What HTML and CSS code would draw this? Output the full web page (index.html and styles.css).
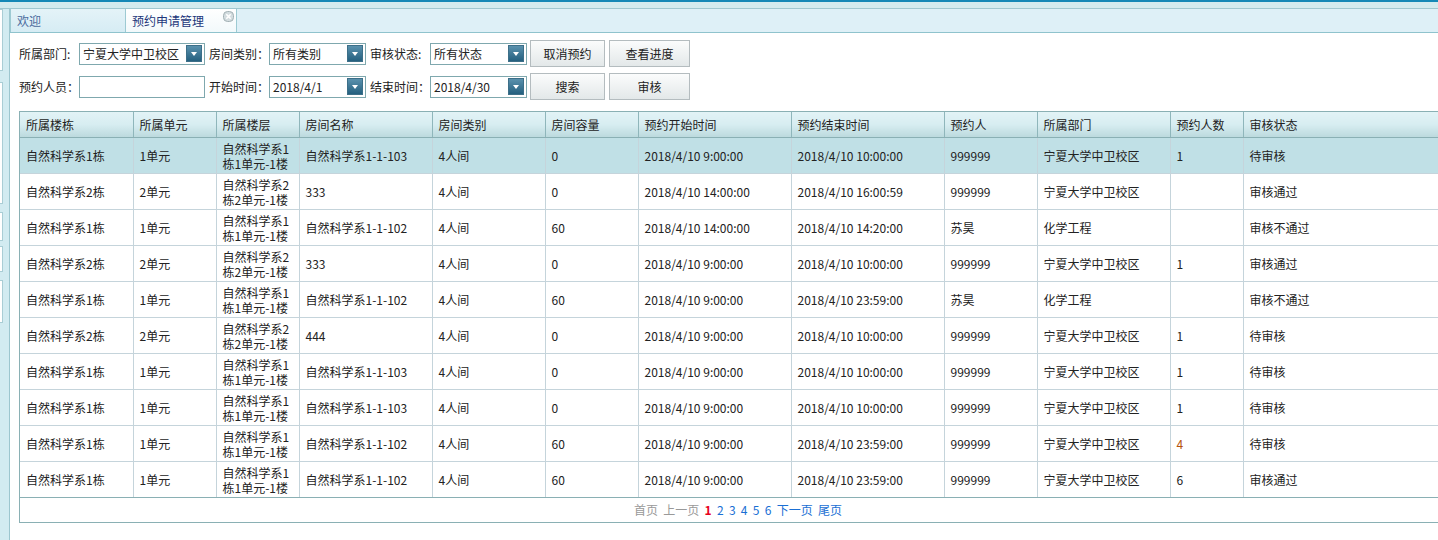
FILE: index.html
```html
<!DOCTYPE html>
<html lang="zh-CN">
<head>
<meta charset="utf-8">
<title>预约申请管理</title>
<link rel="stylesheet" href="styles.css">
</head>
<body>
<div class="topline"></div>
<div class="band"></div>
<div class="layout">
  <div class="side">
    <div class="sbox b1"></div>
    <div class="sbox b2"></div>
    <div class="sbox b3"></div>
    <div class="sbox b4"></div>
    <div class="sbox b5"></div>
  </div>
  <div class="main">
    <div class="tabs">
      <div class="tab">欢迎</div>
      <div class="tab active">预约申请管理<span class="close"><svg width="11" height="11" viewBox="0 0 11 11"><rect x="0.5" y="0.5" width="10" height="10" rx="4" fill="#d3dcdf" stroke="#a3b1b5" stroke-width="1"/><path d="M3.3 3.3L7.7 7.7M7.7 3.3L3.3 7.7" stroke="#fff" stroke-width="1.6"/></svg></span></div>
    </div>
    <div class="content">
      <div class="filters">
        <div class="frow">
          <span class="lbl l1">所属部门:</span>
          <div class="combo w126"><span class="val">宁夏大学中卫校区</span><span class="arrow"></span></div>
          <span class="lbl">房间类别：</span>
          <div class="combo w97"><span class="val">所有类别</span><span class="arrow"></span></div>
          <span class="lbl">审核状态:</span>
          <div class="combo w97"><span class="val">所有状态</span><span class="arrow"></span></div>
          <button class="btn">取消预约</button>
          <button class="btn">查看进度</button>
        </div>
        <div class="frow">
          <span class="lbl l1">预约人员：</span>
          <div class="combo w126"><span class="val"></span></div>
          <span class="lbl">开始时间：</span>
          <div class="combo w97"><span class="val">2018/4/1</span><span class="arrow"></span></div>
          <span class="lbl">结束时间：</span>
          <div class="combo w97"><span class="val">2018/4/30</span><span class="arrow"></span></div>
          <button class="btn">搜索</button>
          <button class="btn">审核</button>
        </div>
      </div>
      <div class="grid">
        <table>
          <colgroup>
            <col class="c113"><col class="c83"><col class="c83"><col class="c133"><col class="c113"><col class="c93"><col class="c153"><col class="c153"><col class="c93"><col class="c133"><col class="c73"><col class="clast">
          </colgroup>
          <thead>
            <tr><th>所属楼栋</th><th>所属单元</th><th>所属楼层</th><th>房间名称</th><th>房间类别</th><th>房间容量</th><th>预约开始时间</th><th>预约结束时间</th><th>预约人</th><th>所属部门</th><th>预约人数</th><th>审核状态</th></tr>
          </thead>
          <tbody>
            <tr class="sel"><td>自然科学系1栋</td><td>1单元</td><td class="two">自然科学系1<br>栋1单元-1楼</td><td>自然科学系1-1-103</td><td>4人间</td><td>0</td><td>2018/4/10 9:00:00</td><td>2018/4/10 10:00:00</td><td>999999</td><td>宁夏大学中卫校区</td><td>1</td><td>待审核</td></tr>
            <tr><td>自然科学系2栋</td><td>2单元</td><td class="two">自然科学系2<br>栋2单元-1楼</td><td>333</td><td>4人间</td><td>0</td><td>2018/4/10 14:00:00</td><td>2018/4/10 16:00:59</td><td>999999</td><td>宁夏大学中卫校区</td><td></td><td>审核通过</td></tr>
            <tr><td>自然科学系1栋</td><td>1单元</td><td class="two">自然科学系1<br>栋1单元-1楼</td><td>自然科学系1-1-102</td><td>4人间</td><td>60</td><td>2018/4/10 14:00:00</td><td>2018/4/10 14:20:00</td><td>苏昊</td><td>化学工程</td><td></td><td>审核不通过</td></tr>
            <tr><td>自然科学系2栋</td><td>2单元</td><td class="two">自然科学系2<br>栋2单元-1楼</td><td>333</td><td>4人间</td><td>0</td><td>2018/4/10 9:00:00</td><td>2018/4/10 10:00:00</td><td>999999</td><td>宁夏大学中卫校区</td><td>1</td><td>审核通过</td></tr>
            <tr><td>自然科学系1栋</td><td>1单元</td><td class="two">自然科学系1<br>栋1单元-1楼</td><td>自然科学系1-1-102</td><td>4人间</td><td>60</td><td>2018/4/10 9:00:00</td><td>2018/4/10 23:59:00</td><td>苏昊</td><td>化学工程</td><td></td><td>审核不通过</td></tr>
            <tr><td>自然科学系2栋</td><td>2单元</td><td class="two">自然科学系2<br>栋2单元-1楼</td><td>444</td><td>4人间</td><td>0</td><td>2018/4/10 9:00:00</td><td>2018/4/10 10:00:00</td><td>999999</td><td>宁夏大学中卫校区</td><td>1</td><td>待审核</td></tr>
            <tr><td>自然科学系1栋</td><td>1单元</td><td class="two">自然科学系1<br>栋1单元-1楼</td><td>自然科学系1-1-103</td><td>4人间</td><td>0</td><td>2018/4/10 9:00:00</td><td>2018/4/10 10:00:00</td><td>999999</td><td>宁夏大学中卫校区</td><td>1</td><td>待审核</td></tr>
            <tr><td>自然科学系1栋</td><td>1单元</td><td class="two">自然科学系1<br>栋1单元-1楼</td><td>自然科学系1-1-103</td><td>4人间</td><td>0</td><td>2018/4/10 9:00:00</td><td>2018/4/10 10:00:00</td><td>999999</td><td>宁夏大学中卫校区</td><td>1</td><td>待审核</td></tr>
            <tr><td>自然科学系1栋</td><td>1单元</td><td class="two">自然科学系1<br>栋1单元-1楼</td><td>自然科学系1-1-102</td><td>4人间</td><td>60</td><td>2018/4/10 9:00:00</td><td>2018/4/10 23:59:00</td><td>999999</td><td>宁夏大学中卫校区</td><td class="num-orange">4</td><td>待审核</td></tr>
            <tr><td>自然科学系1栋</td><td>1单元</td><td class="two">自然科学系1<br>栋1单元-1楼</td><td>自然科学系1-1-102</td><td>4人间</td><td>60</td><td>2018/4/10 9:00:00</td><td>2018/4/10 23:59:00</td><td>999999</td><td>宁夏大学中卫校区</td><td>6</td><td>审核通过</td></tr>
          </tbody>
        </table>
        <div class="pager">
          <span class="dis">首页</span>
          <span class="dis">上一页</span>
          <span class="cur">1</span>
          <a>2</a>
          <a>3</a>
          <a>4</a>
          <a>5</a>
          <a>6</a>
          <a>下一页</a>
          <a>尾页</a>
        </div>
      </div>
    </div>
  </div>
</div>
</body>
</html>
```

FILE: styles.css
```css
* { box-sizing: border-box; }
html, body { margin: 0; padding: 0; }
body {
  width: 1438px;
  height: 540px;
  overflow: hidden;
  background: #fff;
  font-family: "Noto Sans CJK SC", "DejaVu Sans", sans-serif;
  font-size: 12px;
  color: #222;
}
.topline { height: 2px; background: #1488b6; }
.band { height: 7px; background: #d3ebee; border-bottom: 1px solid #9fc8d0; }
.layout { display: flex; height: 531px; }
.side {
  width: 10px;
  flex: none;
  background: #d2ebf1;
  border-right: 1px solid #9cc6cf;
  display: flex;
  flex-direction: column;
}
.sbox { width: 3px; background: #fff; border: 1px solid #a9cdd5; border-left: none; }
.b1 { height: 62px; margin-top: 0; }
.b2 { height: 122px; margin-top: 11px; }
.b3 { height: 29px; margin-top: 8px; }
.b4 { height: 26px; margin-top: 5px; }
.b5 { height: 43px; margin-top: 8px; }
.main { flex: 1; min-width: 0; overflow: hidden; background: #fff; }
.tabs {
  height: 24px;
  background: #def0f7;
  border-bottom: 1px solid #8fc3cd;
  display: flex;
  padding-left: 0;
}
.tab {
  height: 23px;
  line-height: 24px;
  width: 115px;
  padding-left: 6px;
  color: #4a6a9c;
  border-left: 1px solid #9dcad3;
  background: linear-gradient(#e4f3f8, #d6ecf4);
  font-size: 12px;
}
.tab.active {
  width: 112px;
  background: linear-gradient(#ffffff, #f2f9fb);
  border-right: 1px solid #9dcad3;
  color: #22367a;
  position: relative;
}
.close { position: absolute; right: 2px; top: 2px; line-height: 0; }
.content { padding-left: 9px; }
.filters { padding-top: 7px; }
.frow { display: flex; align-items: center; height: 27px; margin-bottom: 6px; }
.frow:nth-child(2) { margin-bottom: 0; }
.lbl { white-space: nowrap; width: 64px; padding-left: 4px; }
.lbl.l1 { width: 60px; padding-left: 0; }
.combo {
  height: 22px;
  border: 1px solid #7fa8ae;
  display: flex;
  align-items: center;
  background: #fff;
}
.w126 { width: 126px; }
.w97 { width: 97px; }
.val { flex: 1; padding-left: 3px; white-space: nowrap; overflow: hidden; }
.arrow {
  width: 16px;
  height: 17px;
  margin-right: 2px;
  background: linear-gradient(#5a91ad, #24607f);
  border: 1px solid #3d6f88;
  position: relative;
}
.arrow::after {
  content: "";
  position: absolute;
  left: 4px;
  top: 6px;
  border-left: 3.5px solid transparent;
  border-right: 3.5px solid transparent;
  border-top: 4px solid #fff;
}
.btn {
  font-family: inherit;
  font-size: 12px;
  color: #222;
  height: 27px;
  width: 75px;
  margin-left: 3px;
  padding: 0;
  border: 1px solid #b4bcbf;
  background: linear-gradient(#fbfcfc, #e3e8e9);
  border-radius: 0;
}
.btn + .btn { margin-left: 4px; width: 81px; }
.grid {
  margin-top: 11px;
  width: 1440px;
  border: 1px solid #8ab0b4;
}
table { border-collapse: collapse; table-layout: fixed; width: 1438px; }
col.c113 { width: 113px; }
col.c83 { width: 83px; }
col.c133 { width: 133px; }
col.c93 { width: 93px; }
col.c153 { width: 153px; }
col.c73 { width: 73px; }
col.clast { width: 215px; }
th {
  height: 25px;
  text-align: left;
  font-weight: normal;
  padding: 0 6px;
  background: linear-gradient(#e2f3f6 0%, #d7edf1 50%, #bcdade 100%);
  border-right: 1px solid #8fb6bb;
  border-bottom: 1px solid #8ab0b4;
  white-space: nowrap;
}
th:last-child { border-right: none; }
td {
  height: 36px;
  padding: 0 6px;
  border-right: 1px solid #c5d4db;
  border-bottom: 1px solid #c5d4db;
  white-space: nowrap;
}
td:last-child { border-right: none; }
td.two { line-height: 15px; padding-top: 1px; }
td.num-orange { color: #b5520c; }
tr.sel td { background: #c0e0e6; }
tbody tr:last-child td { border-bottom: 1px solid #8ab0b4; }
.pager {
  height: 24px;
  line-height: 24px;
  text-align: center;
  font-size: 12px;
  padding-right: 2px;
}
.pager span, .pager a { margin: 0 1.3px; }
.pager .dis { color: #999; }
.pager .cur { color: #e8001c; font-weight: bold; }
.pager a { color: #1a6fd4; }
```
